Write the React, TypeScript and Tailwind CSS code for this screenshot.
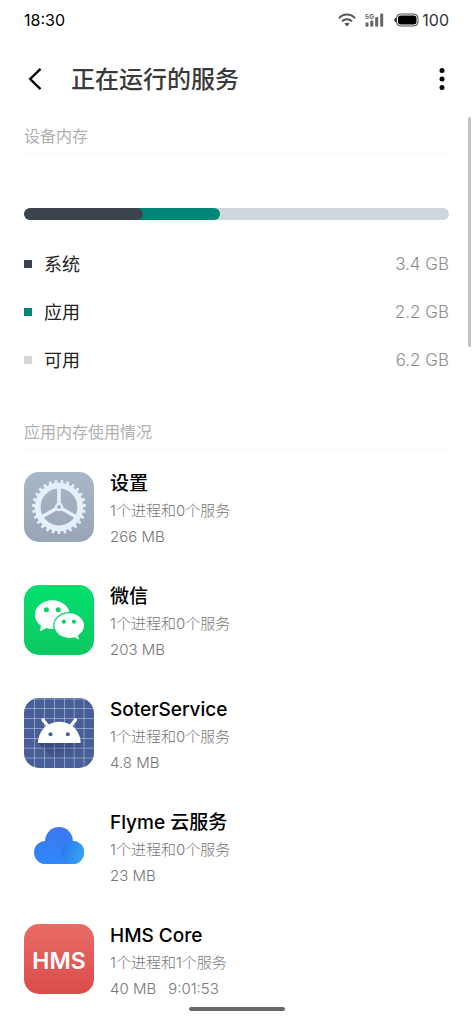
import type { ReactNode } from "react";

const memory = [
  { label: "系统", value: "3.4 GB", swatch: "bg-[#3b444c]" },
  { label: "应用", value: "2.2 GB", swatch: "bg-[#008677]" },
  { label: "可用", value: "6.2 GB", swatch: "bg-[#ced6dc]" },
];

function WifiIcon() {
  return (
    <svg width="18" height="14" viewBox="0 0 18 14" fill="none" stroke="#555" strokeWidth="2" aria-hidden="true">
      <path d="M1 5.2C5.4.4 12.6.4 17 5.2" />
      <path d="M4 8.4c2.8-2.9 7.2-2.9 10 0" />
      <path d="M6.4 10.6 9 13.4l2.6-2.8c-1.5-1.3-3.700-1.300-5.200 0z" fill="#555" stroke="none" />
    </svg>
  );
}

function SignalIcon() {
  return (
    <svg width="19" height="14" viewBox="0 0 19 14" aria-hidden="true">
      <text x="0" y="5.500" fontSize="6.500" fontWeight="700" fill="#666">5G</text>
      <g fill="#666">
        <rect x="0.500" y="9.500" width="3" height="4.200" rx="1" />
        <rect x="5.300" y="7.500" width="3" height="6.200" rx="1" />
        <rect x="10.200" y="4" width="3" height="9.700" rx="1" />
        <rect x="15.200" y="0.500" width="3" height="13.200" rx="1" />
      </g>
    </svg>
  );
}

function BatteryIcon() {
  return (
    <svg width="25" height="14" viewBox="0 0 25 14" aria-hidden="true">
      <path d="M2.200 4.800v4.400C.9 9 .3 8 .3 7s.6-2 1.900-2.200z" fill="#333" />
      <rect x="2.500" y="1" width="21.500" height="12" rx="4" fill="none" stroke="#444" strokeWidth="1" />
      <rect x="4" y="2.500" width="18.500" height="9" rx="2.700" fill="#000" />
    </svg>
  );
}

function SettingsLogo() {
  const teeth = Array.from({ length: 27 }, (_, i) => ((i + 0.5) * 360) / 27);
  return (
    <svg viewBox="0 0 70 70" className="size-full" aria-hidden="true">
      <defs>
        <linearGradient id="set-bg" x1="0" y1="0" x2="0" y2="1">
          <stop offset="0" stopColor="#a8b7c8" />
          <stop offset="1" stopColor="#98a5b7" />
        </linearGradient>
      </defs>
      <rect width="70" height="70" rx="15" fill="url(#set-bg)" />
      <g stroke="#e6effa" fill="none">
        <circle cx="35" cy="35" r="21.300" strokeWidth="5.800" />
        {teeth.map((a) => (
          <path key={a} d="M35 12V9.200" strokeWidth="2.800" strokeLinecap="round" transform={`rotate(${a} 35 35)`} />
        ))}
        {[0, 120, 240].map((a) => (
          <path key={a} d="M35 32V15" strokeWidth="3.600" transform={`rotate(${a} 35 35)`} />
        ))}
        <circle cx="35" cy="35" r="3.100" strokeWidth="2.400" />
      </g>
    </svg>
  );
}

function WeChatLogo() {
  return (
    <svg viewBox="0 0 70 70" className="size-full" aria-hidden="true">
      <defs>
        <linearGradient id="wx-bg" x1="0" y1="0" x2="0" y2="1">
          <stop offset="0" stopColor="#04e06f" />
          <stop offset="1" stopColor="#0cc860" />
        </linearGradient>
      </defs>
      <rect width="70" height="70" rx="15" fill="url(#wx-bg)" />
      <path d="M28.300 15.300c-9.700 0-17.400 6.400-17.400 14.400 0 4.500 2.400 8.400 6.200 11.100l-1.100 4.700c-.1.600.4.800.9.500l5.400-3c1.900.6 3.900.9 6 .9 9.700 0 17.400-6.300 17.400-14.200s-7.700-14.400-17.400-14.400z" fill="#fff" />
      <path d="M45.200 28.300c-8.200 0-14.800 5.600-14.800 12.300s6.600 12.300 14.800 12.300c1.700 0 3.400-.2 4.900-.7l4 2.100c.5.300.9 0 .8-.5l-.9-3.500c3.700-2.400 6-5.700 6-9.700 0-6.700-6.600-12.300-14.800-12.300z" fill="#fff" stroke="#08d568" strokeWidth="2.600" paintOrder="stroke" />
      <g fill="#08d568">
        <circle cx="22.400" cy="24.800" r="2.500" />
        <circle cx="34.200" cy="24.800" r="2.500" />
        <circle cx="39.900" cy="36.700" r="2.100" />
        <circle cx="50" cy="36.700" r="2.100" />
      </g>
    </svg>
  );
}

function AndroidLogo() {
  const lines = [10.5, 20.5, 30.5, 40.5, 50.2, 60];
  return (
    <svg viewBox="0 0 70 70" className="size-full" aria-hidden="true">
      <defs>
        <clipPath id="an-clip">
          <rect width="70" height="70" rx="15" />
        </clipPath>
        <linearGradient id="an-shadow" x1="0" y1="0" x2="1" y2="1">
          <stop offset="0" stopColor="#1c2b55" stopOpacity="0.450" />
          <stop offset="0.600" stopColor="#1c2b55" stopOpacity="0" />
        </linearGradient>
      </defs>
      <g clipPath="url(#an-clip)">
        <rect width="70" height="70" fill="#475e96" />
        <g stroke="#c8d2e8" strokeOpacity="0.600" strokeWidth="0.900">
          {lines.map((p) => (
            <path key={p} d={`M${p} 0V70M0 ${p}H70`} />
          ))}
          <path d="M0 1H70" />
        </g>
        <path d="M14 45 39 70H70V58.500L56.500 45z" fill="url(#an-shadow)" />
      </g>
      <path d="M14 45c0-12 9.300-21.300 21.300-21.300S56.600 33 56.600 45z" fill="#fff" />
      <path d="m19 22 6 7M51.500 22l-6 7" stroke="#fff" strokeWidth="3.200" strokeLinecap="round" />
      <g fill="#475e96">
        <circle cx="26.500" cy="36.200" r="2" />
        <circle cx="43.800" cy="36.200" r="2" />
      </g>
    </svg>
  );
}

function CloudLogo() {
  return (
    <svg viewBox="0 0 70 70" className="size-full" aria-hidden="true">
      <defs>
        <linearGradient id="cl-bg" gradientUnits="userSpaceOnUse" x1="0" y1="15" x2="0" y2="52">
          <stop offset="0" stopColor="#3d76ea" />
          <stop offset="1" stopColor="#3088fd" />
        </linearGradient>
        <linearGradient id="cl-dot" x1="0" y1="0.300" x2="1" y2="0.700">
          <stop offset="0" stopColor="#2c78ea" />
          <stop offset="1" stopColor="#35a5fb" />
        </linearGradient>
      </defs>
      <g fill="url(#cl-bg)">
        <circle cx="35" cy="30" r="13.900" />
        <rect x="10" y="30" width="50" height="23" rx="11.500" />
      </g>
      <circle cx="48.600" cy="41.500" r="11.500" fill="url(#cl-dot)" />
    </svg>
  );
}

function HmsLogo() {
  return (
    <div className="flex size-full items-center justify-center rounded-[15px] bg-linear-to-b from-[#e96b66] to-[#da4c4c] pt-1 text-[23px] leading-none font-semibold text-white">
      HMS
    </div>
  );
}

const apps: { name: string; detail: string; size: string; time?: string; logo: ReactNode }[] = [
  { name: "设置", detail: "1个进程和0个服务", size: "266 MB", logo: <SettingsLogo /> },
  { name: "微信", detail: "1个进程和0个服务", size: "203 MB", logo: <WeChatLogo /> },
  { name: "SoterService", detail: "1个进程和0个服务", size: "4.8 MB", logo: <AndroidLogo /> },
  { name: "Flyme 云服务", detail: "1个进程和0个服务", size: "23 MB", logo: <CloudLogo /> },
  { name: "HMS Core", detail: "1个进程和1个服务", size: "40 MB", time: "9:01:53", logo: <HmsLogo /> },
];

function SectionTitle({ children }: { children: ReactNode }) {
  return (
    <h2 className="flex h-9 items-center border-b border-[#f7f7f7] text-[16px] leading-6 font-normal text-[#b0b0b0]">
      {children}
    </h2>
  );
}

export default function App() {
  return (
    <div className="relative min-h-screen bg-white font-['Inter','Noto_Sans_CJK_SC',sans-serif] text-black">
      <div className="flex h-10 items-center justify-between px-6 text-[16px]">
        <time>18:30</time>
        <div className="flex items-center text-[#333]">
          <WifiIcon />
          <span className="ml-[9px] flex"><SignalIcon /></span>
          <span className="ml-2.5 flex"><BatteryIcon /></span>
          <span className="ml-[3px]">100</span>
        </div>
      </div>

      <header className="flex h-[78px] items-center px-6">
        <button type="button" aria-label="返回" className="flex w-[47px] pl-1">
          <svg width="14" height="24" viewBox="0 0 14 24" fill="none" stroke="#000" strokeWidth="2.400" aria-hidden="true">
            <path d="M12.500 1.800 2.200 12l10.300 10.200" />
          </svg>
        </button>
        <h1 className="flex-1 pt-0.5 text-[24px] leading-8 font-medium text-[#3a3a3a]">正在运行的服务</h1>
        <button type="button" aria-label="更多" className="flex pr-1">
          <svg width="6" height="24" viewBox="0 0 6 24" aria-hidden="true">
            <circle cx="3" cy="3.500" r="2.500" />
            <circle cx="3" cy="12" r="2.500" />
            <circle cx="3" cy="20.500" r="2.500" />
          </svg>
        </button>
      </header>

      <main className="px-6">
        <section>
          <SectionTitle>设备内存</SectionTitle>
          <div className="relative mt-[54px] h-3 overflow-hidden rounded-full bg-[#ced6dc]">
            <div className="h-full w-[46%] rounded-full bg-[#008677]">
              <div className="h-full w-[61%] rounded-full bg-[#3b444c]" />
            </div>
          </div>
          <dl className="mt-5">
            {memory.map((m) => (
              <div key={m.label} className="flex h-12 items-center">
                <span className={`size-2 ${m.swatch}`} />
                <dt className="ml-3 flex-1 pt-0.5 text-[18px] leading-6 text-[#222]">{m.label}</dt>
                <dd className="text-[17px] leading-6 font-light text-[#8c8c8c]">{m.value}</dd>
              </div>
            ))}
          </dl>
        </section>

        <section className="mt-[30px]">
          <SectionTitle>应用内存使用情况</SectionTitle>
          <ul className="mt-3.5 flex flex-col gap-[27px]">
            {apps.map((app) => (
              <li key={app.name} className="flex items-center gap-4">
                <div className="size-[70px] shrink-0">{app.logo}</div>
                <div className="min-w-0 pt-1.5">
                  <h3 className="text-[19px] leading-7 font-medium">{app.name}</h3>
                  <p className="text-[15px] leading-[26px] font-light text-[#777]">{app.detail}</p>
                  <p className="flex gap-3 text-[15px] leading-[26px] font-light text-[#777]">
                    <span>{app.size}</span>
                    {app.time && <span>{app.time}</span>}
                  </p>
                </div>
              </li>
            ))}
          </ul>
        </section>
      </main>

      <div className="absolute top-[117px] right-[2px] h-[230px] w-[3px] rounded-full bg-[#c2c2c2]" />
      <div className="fixed bottom-[13px] left-1/2 h-1 w-24 -translate-x-1/2 rounded-full bg-[#686868]" />
    </div>
  );
}
